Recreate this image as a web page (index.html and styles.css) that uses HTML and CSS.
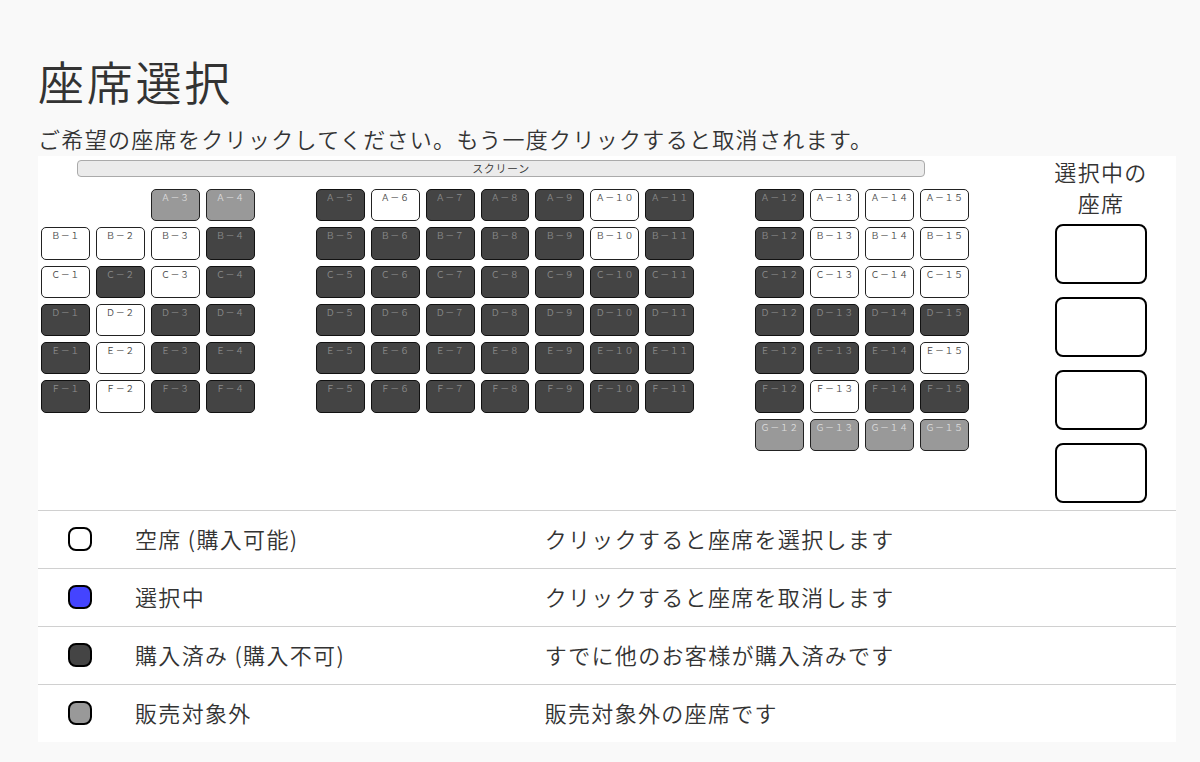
FILE: index.html
```html
<!DOCTYPE html>
<html lang="ja">
<head>
	<meta charset="UTF-8">

	<title>座席選択</title>

	<meta name="viewport" content="width=device-width, initial-scale=1">
	<link rel="stylesheet" href="styles.css">
</head>



<body>
<main>
	<h1>座席選択</h1>
	<p>ご希望の座席をクリックしてください。もう一度クリックすると取消されます。</p>
	<div class="panel">
		<div class="picker">
			<section class="hall">
				<div class="screen">スクリーン</div>
				<div class="seats" id="seats"></div><!--#seats end-->
			</section>
			<aside class="chosen">
				<h2>選択中の座席</h2>
				<ul id="slots">
					<li></li>
					<li></li>
					<li></li>
					<li></li>
				</ul>
			</aside>
		</div>
		<table class="legend">
			<tr>
				<td class="mark"><span class="swatch"></span></td>
				<th scope="row">空席 (購入可能)</th>
				<td>クリックすると座席を選択します</td>
			</tr>
			<tr>
				<td class="mark"><span class="swatch selected"></span></td>
				<th scope="row">選択中</th>
				<td>クリックすると座席を取消します</td>
			</tr>
			<tr>
				<td class="mark"><span class="swatch sold"></span></td>
				<th scope="row">購入済み (購入不可)</th>
				<td>すでに他のお客様が購入済みです</td>
			</tr>
			<tr>
				<td class="mark"><span class="swatch closed"></span></td>
				<th scope="row">販売対象外</th>
				<td>販売対象外の座席です</td>
			</tr>
		</table>
	</div>
</main>



<script>
// o = free, x = sold, n = not for sale, . = no seat, space = aisle
const rows = {
	A: `..nn xoxxxox xooo`,
	B: `ooox xxxxxox xooo`,
	C: `oxox xxxxxxx xooo`,
	D: `xoxx xxxxxxx xxxx`,
	E: `xoxx xxxxxxx xxxo`,
	F: `xoxx xxxxxxx xoxx`,
	G: `.... ....... nnnn`,
};
const states = {o: `free`, x: `sold`, n: `closed`};
const seats = document.getElementById(`seats`);
const slots = document.querySelectorAll(`#slots li`);
let selected = [];

// seat labels use full-width characters
const wide = (text) => text.replace(/[!-~]/g, (c) => String.fromCharCode(c.charCodeAt(0) + 0xfee0));

function toggle(seat) {
	if (selected.includes(seat)) {
		selected = selected.filter((item) => item !== seat);
	} else if (selected.length < slots.length) {
		selected.push(seat);
	}
	seat.classList.toggle(`selected`, selected.includes(seat));
	slots.forEach((slot, i) => {
		slot.textContent = selected[i] ? selected[i].textContent : ``;
	});
}

for (const [row, plan] of Object.entries(rows)) {
	let number = 0;
	[...plan].forEach((mark) => {
		if (mark !== ` `) {
			number++;
		}
		if (!states[mark]) {
			seats.append(document.createElement(`span`));
			return;
		}
		const seat = document.createElement(`button`);
		seat.type = `button`;
		seat.className = `seat ${states[mark]}`;
		seat.textContent = wide(`${row}-${number}`);
		seat.disabled = mark !== `o`;
		seat.addEventListener(`click`, () => toggle(seat));
		seats.append(seat);
	});
}
</script>
</body>
</html>
```

FILE: styles.css
```css
*,
::before,
::after {
	box-sizing: border-box;
}
body {
	margin: 0;
	background: #f9f9f9;
	color: #333;
	font-family: "Noto Sans CJK JP", sans-serif;
	font-weight: 350;
	font-size: 22px;
	line-height: 31px;
}
body,
h1,
.screen,
.seat {
	letter-spacing: 0.06em;
}
main {
	padding: 52px 24px 16px 38px;
}
h1 {
	margin: 0 0 15px;
	font-weight: 350;
	font-size: 46px;
	line-height: 56px;
}
p {
	margin: 0 0 2px;
}
.panel {
	background: #fff;
}
.picker {
	display: flex;
	padding-bottom: 7px;
}
.hall {
	flex: 1;
	padding: 4px 57px 0 3px;
}
.screen {
	margin: 0 44px 12px 36px;
	border: 1px solid #aaa;
	border-radius: 4px;
	background: #ebebeb;
	font-size: 11px;
	line-height: 15px;
	text-align: center;
}
.seats {
	display: grid;
	grid-template-columns: repeat(17, 1fr);
	grid-template-rows: repeat(7, 1fr);
	gap: 6px;
	height: 262px;
}
.seat {
	min-width: 0;
	padding: 2px 0 0;
	display: flex;
	justify-content: center;
	align-items: flex-start;
	border: 1px solid #222;
	border-radius: 5px;
	background: #fff;
	color: #444;
	font-family: inherit;
	font-weight: 350;
	font-size: 9px;
	line-height: 11px;
	white-space: nowrap;
}
.seat.sold {
	border-color: #111;
	color: #8c8c8c;
}
.seat.closed {
	color: #ddd;
}
.sold {
	background: #444;
}
.closed {
	background: #999;
}
.selected {
	background: #44f;
}
.chosen {
	width: 150px;
	padding: 0 26px;
	text-align: center;
}
h2 {
	margin: 0 0 6px;
	font-weight: 350;
	font-size: 22px;
}
.chosen ul {
	margin: 0 3px;
	padding: 0;
	display: grid;
	gap: 13px;
	list-style: none;
}
.chosen li {
	height: 60px;
	border: 2px solid #000;
	border-radius: 8px;
	line-height: 56px;
}
.legend {
	width: 100%;
	border-collapse: collapse;
	table-layout: fixed;
}
.legend th,
.legend td {
	width: auto;
	padding: 12px 0 14px;
	border-top: 1px solid #d0d0d0;
	font-weight: 350;
	text-align: left;
}
.legend th {
	width: 36%;
}
.legend .mark {
	width: 97px;
	padding-left: 30px;
}
.swatch {
	width: 24px;
	height: 24px;
	display: block;
	border: 2px solid #000;
	border-radius: 8px;
}
```
